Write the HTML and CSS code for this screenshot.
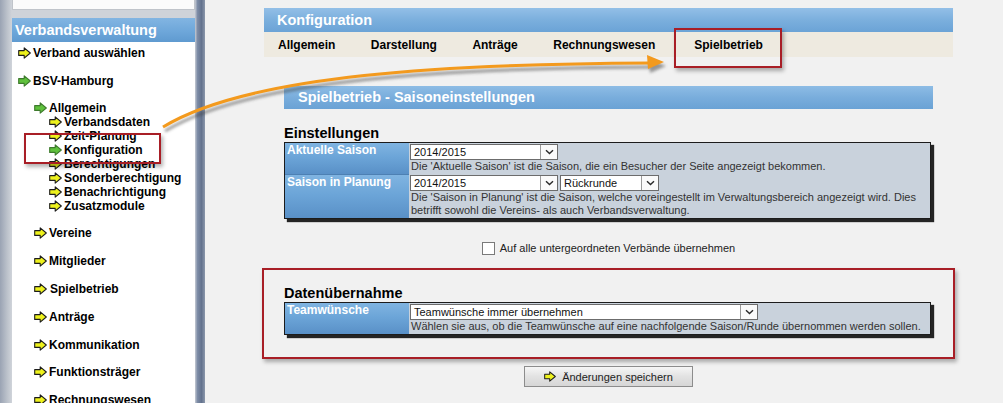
FILE: index.html
```html
<!DOCTYPE html>
<html lang="de">
<head>
<meta charset="utf-8">
<title>Verbandsverwaltung – Konfiguration</title>
<link rel="stylesheet" href="styles.css">
</head>
<body>
<svg class="sprite" xmlns="http://www.w3.org/2000/svg" aria-hidden="true">
  <symbol id="ay" viewBox="0 0 13 12"><path d="M0.7 3.6H6.2V0.9L12.3 6 6.2 11.1V8.4H0.7Z" fill="#eef21c" stroke="#1c1c1c" stroke-width="1.1" stroke-linejoin="round"/></symbol>
  <symbol id="ag" viewBox="0 0 13 12"><path d="M0.7 3.6H6.2V0.9L12.3 6 6.2 11.1V8.4H0.7Z" fill="#5fc13c" stroke="#3d7a2c" stroke-width="1.1" stroke-linejoin="round"/></symbol>
  <symbol id="chev" viewBox="0 0 9 6"><path d="M1 1.2L4.5 4.6 8 1.2" fill="none" stroke="#2a2a2a" stroke-width="1.4"/></symbol>
</svg>
<div class="page">
  <aside class="sidebar">
    <div class="side-gutter"></div>
    <div class="side-col">
      <div class="side-prev"></div>
      <div class="side-panel">
        <div class="side-head">Verbandsverwaltung</div>
        <ul class="nav">
          <li class="item"><svg class="ico"><use href="#ay"/></svg>Verband auswählen</li>
          <li class="item gap"><svg class="ico"><use href="#ag"/></svg>BSV-Hamburg</li>
          <li>
            <ul class="nav-l2">
              <li class="item gap short"><svg class="ico"><use href="#ag"/></svg>Allgemein</li>
              <li>
                <ul class="nav-l3">
                  <li class="item"><svg class="ico"><use href="#ay"/></svg>Verbandsdaten</li>
                  <li class="item"><svg class="ico"><use href="#ay"/></svg>Zeit-Planung</li>
                  <li class="item"><svg class="ico"><use href="#ag"/></svg>Konfiguration</li>
                  <li class="item"><svg class="ico"><use href="#ay"/></svg>Berechtigungen</li>
                  <li class="item"><svg class="ico"><use href="#ay"/></svg>Sonderberechtigung</li>
                  <li class="item"><svg class="ico"><use href="#ay"/></svg>Benachrichtigung</li>
                  <li class="item"><svg class="ico"><use href="#ay"/></svg>Zusatzmodule</li>
                </ul>
              </li>
              <li class="item gap"><svg class="ico"><use href="#ay"/></svg>Vereine</li>
              <li class="item gap"><svg class="ico"><use href="#ay"/></svg>Mitglieder</li>
              <li class="item gap nudge"><svg class="ico"><use href="#ay"/></svg>Spielbetrieb</li>
              <li class="item gap"><svg class="ico"><use href="#ay"/></svg>Anträge</li>
              <li class="item gap"><svg class="ico"><use href="#ay"/></svg>Kommunikation</li>
              <li class="item gap"><svg class="ico"><use href="#ay"/></svg>Funktionsträger</li>
              <li class="item gap"><svg class="ico"><use href="#ay"/></svg>Rechnungswesen</li>
            </ul>
          </li>
        </ul>
      </div>
    </div>
    <div class="side-edge"></div>
  </aside>

  <main class="main">
    <div class="cfg-bar">Konfiguration</div>
    <nav class="tabs">
      <span class="tab">Allgemein</span>
      <span class="tab">Darstellung</span>
      <span class="tab">Anträge</span>
      <span class="tab">Rechnungswesen</span>
      <span class="tab tab-last">Spielbetrieb</span>
    </nav>

    <div class="sec-head">Spielbetrieb - Saisoneinstellungen</div>

    <section class="block">
      <h2 class="block-title">Einstellungen</h2>
      <div class="tbl">
        <div class="lbl">Aktuelle Saison</div>
        <div class="val">
          <div class="sels">
            <span class="sel sel-season"><span class="sel-text">2014/2015</span><span class="sel-btn"><svg class="chev"><use href="#chev"/></svg></span></span>
          </div>
          <div class="desc">Die 'Aktuelle Saison' ist die Saison, die ein Besucher der Seite angezeigt bekommen.</div>
        </div>
        <div class="lbl lbl-next">Saison in Planung</div>
        <div class="val val-next">
          <div class="sels">
            <span class="sel sel-season"><span class="sel-text">2014/2015</span><span class="sel-btn"><svg class="chev"><use href="#chev"/></svg></span></span>
            <span class="sel sel-round"><span class="sel-text">Rückrunde</span><span class="sel-btn"><svg class="chev"><use href="#chev"/></svg></span></span>
          </div>
          <div class="desc">Die 'Saison in Planung' ist die Saison, welche voreingestellt im Verwaltungsbereich angezeigt wird. Dies betrifft sowohl die Vereins- als auch Verbandsverwaltung.</div>
        </div>
      </div>
    </section>

    <label class="check-row"><span class="cbox"></span><span>Auf alle untergeordneten Verbände übernehmen</span></label>

    <section class="hl-box">
      <h2 class="block-title">Datenübernahme</h2>
      <div class="tbl">
        <div class="lbl">Teamwünsche</div>
        <div class="val">
          <div class="sels">
            <span class="sel sel-wide"><span class="sel-text">Teamwünsche immer übernehmen</span><span class="sel-btn"><svg class="chev"><use href="#chev"/></svg></span></span>
          </div>
          <div class="desc">Wählen sie aus, ob die Teamwünsche auf eine nachfolgende Saison/Runde übernommen werden sollen.</div>
        </div>
      </div>
    </section>

    <div class="actions">
      <button class="btn" type="button"><svg class="btn-ico"><use href="#ay"/></svg>Änderungen speichern</button>
    </div>
  </main>

  <div class="mark mark-nav"></div>
  <div class="mark mark-tab"></div>

  <svg class="callout" viewBox="0 0 1003 403" xmlns="http://www.w3.org/2000/svg" aria-hidden="true">
    <defs>
      <filter id="blur" x="-10%" y="-50%" width="120%" height="200%"><feGaussianBlur stdDeviation="1.6"/></filter>
    </defs>
    <g transform="translate(2,4)" filter="url(#blur)" opacity="0.5">
      <path d="M163 127 C250 74 450 64 650 63" fill="none" stroke="#3a3a3a" stroke-width="3"/>
      <polygon points="664,62 647,55 648,69" fill="#3a3a3a"/>
    </g>
    <path d="M163 127 C250 74 450 64 650 63" fill="none" stroke="#f39a1e" stroke-width="3"/>
    <polygon points="664,62 647,55 648,69" fill="#f39a1e"/>
  </svg>
</div>
</body>
</html>
```

FILE: styles.css
```css
* { box-sizing: border-box; }

html, body {
  margin: 0;
  height: 100%;
  overflow: hidden;
}

body {
  background: #f1f1f1;
  font-family: "Liberation Sans", Arial, sans-serif;
  color: #000;
}

.sprite {
  display: block;
  width: 0;
  height: 0;
  overflow: hidden;
}

.page {
  position: relative;
  display: flex;
  width: 1003px;
  height: 403px;
}

/* ---------- Sidebar ---------- */
.sidebar {
  display: flex;
  flex: none;
  width: 205px;
  height: 100%;
}

.side-gutter {
  width: 12px;
  background: linear-gradient(to right, #9aa3b3, #bcc2cb 60%, #d0d4da);
}

.side-col {
  width: 183px;
  display: flex;
  flex-direction: column;
  background: #cfd3d9;
  overflow: hidden;
}

.side-prev {
  flex: none;
  height: 10px;
  margin-bottom: 8px;
  background: #fbfbfb;
  border: 1px solid #c0c4ca;
  border-top: none;
}

.side-panel {
  flex: 1 0 auto;
  background: #fff;
}

.side-head {
  height: 24px;
  padding-left: 3px;
  background: linear-gradient(#82b5e2, #6ea7da 55%, #5f9ad0);
  color: #fff;
  font-weight: bold;
  font-size: 14.5px;
  line-height: 24px;
}

.side-edge {
  width: 10px;
  background: linear-gradient(to right, #c5cad3, #7d8ca6 25%, #64738e 65%, #8b97ab);
}

.nav, .nav-l2, .nav-l3 {
  list-style: none;
  margin: 0;
  padding: 0;
}

.nav {
  padding: 4px 0 0 6px;
  font-weight: bold;
  font-size: 12px;
}

.nav-l2 { padding-left: 16px; }
.nav-l3 { padding-left: 15px; }

.item {
  display: flex;
  align-items: center;
  height: 14px;
  line-height: 14px;
  white-space: nowrap;
}

.item.short { height: 13px; }
.gap { margin-top: 13.8px; }
.nudge .ico { margin-right: 3px; }

.ico {
  flex: none;
  width: 13px;
  height: 12px;
  margin-right: 2px;
}

/* ---------- Main ---------- */
.main {
  flex: 1;
  padding: 8px 0 0 59px;
}

.cfg-bar {
  width: 689px;
  height: 24px;
  padding-left: 13px;
  background: linear-gradient(#93bfe7, #7bafdd 50%, #6ba3d6);
  color: #fff;
  font-weight: bold;
  font-size: 14.5px;
  line-height: 24px;
}

.tabs {
  display: flex;
  align-items: center;
  gap: 35.5px;
  width: 689px;
  height: 25px;
  padding-left: 14px;
  background: #eeeae0;
  font-weight: bold;
  font-size: 12px;
}

.tab-last { margin-left: 3.5px; }

.sec-head {
  width: 649px;
  height: 23px;
  margin: 29px 0 0 20px;
  padding-left: 14px;
  background: linear-gradient(#8dbce5, #79addc 50%, #6aa2d5);
  color: #fff;
  font-weight: bold;
  font-size: 14.5px;
  line-height: 23px;
}

.block {
  width: 647px;
  margin-left: 20px;
}

.block-title {
  margin: 15px 0 0;
  height: 18px;
  font-size: 14.5px;
  line-height: 18px;
  font-weight: bold;
}

.tbl {
  display: grid;
  grid-template-columns: 124px 1fr;
  width: 647px;
  border: 1px solid #1c1c1c;
  background: #c9d2dc;
  box-shadow: 3px 3px 1px rgba(0, 0, 0, 0.85);
}

.lbl {
  padding: 0 2px;
  background: linear-gradient(#80b4e1, #6ca5d8 45%, #5990c7);
  color: #fff;
  font-weight: bold;
  font-size: 12px;
  line-height: 15px;
}

.lbl-next { border-top: 1px solid #4d80b3; }

.val {
  padding: 1px 2px 1px 1px;
  font-size: 11px;
  line-height: 13px;
  color: #333;
}

.sels {
  display: flex;
  gap: 2px;
}

.sel {
  display: flex;
  height: 16px;
  border: 1px solid #6c6c6c;
  background: #fff;
  color: #111;
  font-size: 11px;
  line-height: 14px;
}

.sel-text {
  flex: 1;
  padding-left: 3px;
  white-space: nowrap;
  overflow: hidden;
}

.sel-btn {
  flex: none;
  display: flex;
  align-items: center;
  justify-content: center;
  width: 17px;
  margin: 0;
  border-left: 1px solid #9a9a9a;
  background: #fafafa;
}

.chev {
  width: 9px;
  height: 6px;
}

.sel-season { width: 148px; }
.sel-round { width: 99px; }
.sel-wide { width: 348px; }

.desc { padding-left: 1px; }

.check-row {
  display: flex;
  align-items: center;
  justify-content: center;
  gap: 5px;
  width: 689px;
  height: 14px;
  margin-top: 22px;
  font-size: 11px;
  color: #222;
}

.cbox {
  width: 13px;
  height: 13px;
  border: 1px solid #7a7a7a;
  background: #fff;
}

.hl-box {
  width: 693px;
  margin: 13px 0 0 -2px;
  padding: 14px 0 22px 20px;
  border: 2px solid #a81e26;
  box-shadow: 2px 3px 4px rgba(0, 0, 0, 0.3);
}

.hl-box .block-title { margin-top: 0; }

.actions {
  display: flex;
  justify-content: center;
  width: 689px;
  margin-top: 7px;
}

.btn {
  display: flex;
  align-items: center;
  justify-content: center;
  gap: 6px;
  width: 169px;
  height: 21px;
  padding: 0;
  border: 1px solid #8c8c8c;
  border-radius: 0;
  background: linear-gradient(#f6f6f6, #e2e2e2 50%, #d6d6d6);
  font-family: "Liberation Sans", Arial, sans-serif;
  font-size: 11px;
  color: #222;
}

.btn-ico {
  width: 12px;
  height: 11px;
}

/* ---------- Annotation overlays ---------- */
.mark {
  position: absolute;
  border: 2px solid #a81e26;
  box-shadow: 2px 3px 4px rgba(0, 0, 0, 0.3);
  pointer-events: none;
}

.mark-nav {
  left: 24px;
  top: 133px;
  width: 137px;
  height: 31px;
}

.mark-tab {
  left: 674px;
  top: 28px;
  width: 108px;
  height: 40px;
}

.callout {
  position: absolute;
  left: 0;
  top: 0;
  width: 1003px;
  height: 403px;
  pointer-events: none;
}
```
